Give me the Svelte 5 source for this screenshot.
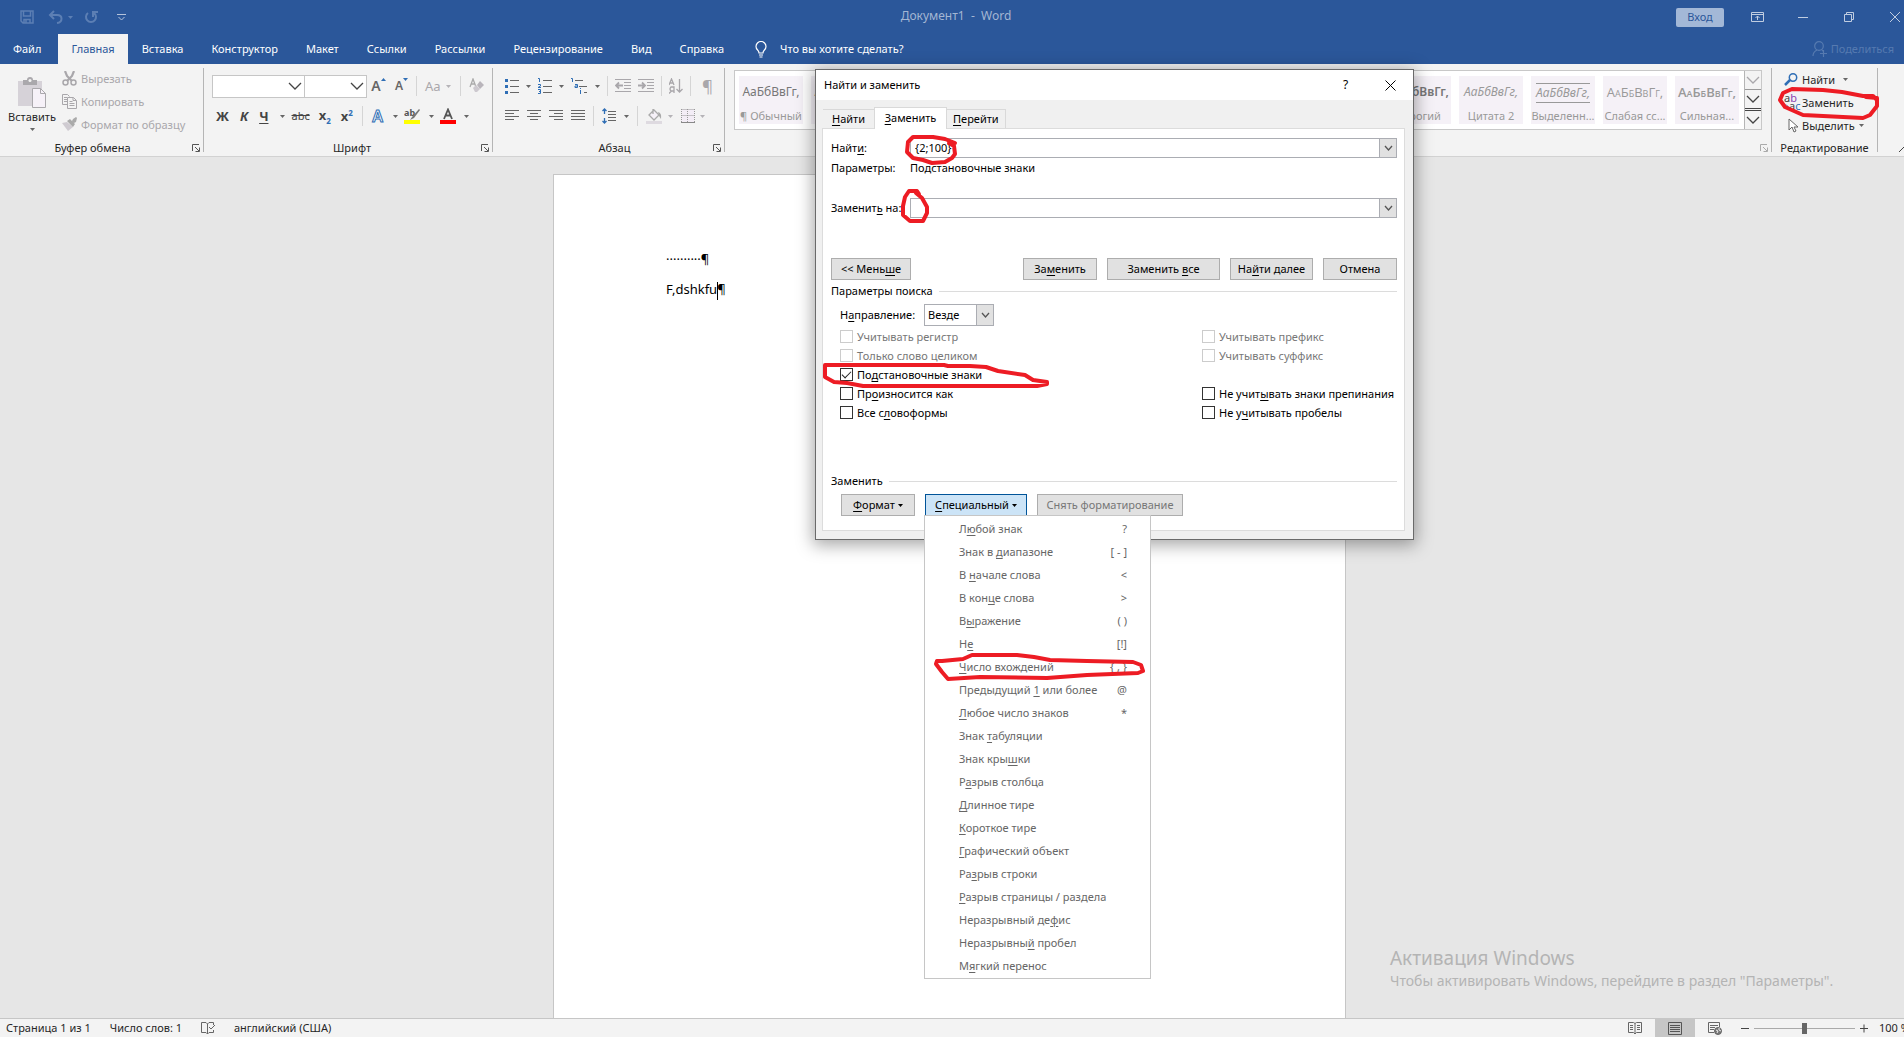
<script>
	let direction = $state('all');
	let zoom = $state(50);
	let find = $state('{2;100}');
	let replace = $state('');

	const tabs = ['Файл', 'Главная', 'Вставка', 'Конструктор', 'Макет', 'Ссылки', 'Рассылки', 'Рецензирование', 'Вид', 'Справка'];

	const styles = [
		{ name: '¶ Обычный', kind: 'dark' },
		{ name: '¶ Без ин...', kind: 'dark' },
		{ name: 'Заголо...', kind: '' },
		{ name: 'Заголо...', kind: '' },
		{ name: 'Название', kind: '' },
		{ name: 'Подзаг...', kind: '' },
		{ name: 'Слабое...', kind: 'italic' },
		{ name: 'Выделе...', kind: 'italic' },
		{ name: 'Сильно...', kind: 'italic' },
		{ name: 'Строгий', kind: 'bold dark' },
		{ name: 'Цитата 2', kind: 'italic' },
		{ name: 'Выделенн...', kind: 'italic lined' },
		{ name: 'Слабая сс...', kind: 'caps' },
		{ name: 'Сильная...', kind: 'caps bold' }
	];

	// "&" stands before the access key
	const special = [
		['Л&юбой знак', '?'],
		['Знак в &диапазоне', '[ - ]'],
		['В &начале слова', '<'],
		['В кон&це слова', '>'],
		['В&ыражение', '( )'],
		['Н&е', '[!]'],
		['&Число вхождений', '{ , }'],
		['Предыдущий &1 или более', '@'],
		['&Любое число знаков', '*'],
		['Знак &табуляции'],
		['Знак кры&шки'],
		['Р&азрыв столбца'],
		['&Длинное тире'],
		['&Короткое тире'],
		['&Графический объект'],
		['Ра&зрыв строки'],
		['&Разрыв страницы / раздела'],
		['Неразрывный де&фис'],
		['Неразрывны&й пробел'],
		['М&ягкий перенос']
	];

	const leftOptions = [
		{ label: 'Учитывать регистр', disabled: true },
		{ label: 'Только слово целиком', disabled: true },
		{ label: 'По&дстановочные знаки', checked: true },
		{ label: 'Пр&оизносится как' },
		{ label: 'Все с&ловоформы' }
	];

	const rightOptions = [
		{ label: 'Учитывать префикс', disabled: true },
		{ label: 'Учитывать суффикс', disabled: true },
		null,
		{ label: 'Не учит&ывать знаки препинания' },
		{ label: 'Не у&читывать пробелы' }
	];

	const ink = [
		'M955 143L945 139L933 137L913 137L908 142L907 152L913 158L923 160L932 163L945 162L952 158L955 154L954 146L949 143',
		'M919 194L917 191L909 191L905 197L903 206V215L910 221H923L927 213V207L922 198L916 193',
		'M986 367L970 366H948L944 365H825V377L834 382L847 383L863 386H1037L1047 384V382L1033 380L1025 375L998 371L986 367',
		'M942 661L963 659L972 655H1017L1034 657L1050 660L1087 661L1133 662L1141 665L1143 671L1138 673L1087 675L1047 678L980 677L948 679L942 672L936 664L937 661H942',
		'M1876 99L1873 96L1863 96L1842 92L1823 90L1792 89L1783 93L1780 100L1785 107L1803 115L1863 118L1870 115L1877 106V98L1866 97'
	];
</script>

{#snippet mnemonic(text)}
	{@const at = text.indexOf('&')}
	{#if at < 0}{text}{:else}<span>{text.slice(0, at)}<u>{text[at + 1]}</u>{text.slice(at + 2)}</span>{/if}
{/snippet}

{#snippet caret()}
	<svg class="caret" width="5" height="3" viewBox="0 0 5 3"><path d="M0 0h5L2.500 3z" fill="currentColor" /></svg>
{/snippet}

{#snippet chevron(w, h)}
	<svg width={w} height={h} viewBox="0 0 {w} {h}"><path d="M1 1L{w / 2} {h - 1}L{w - 1} 1" fill="none" stroke="currentColor" stroke-width="1.3" /></svg>
{/snippet}

{#snippet launcher(label)}
	<button class="launcher" aria-label={label}>
		<svg width="8" height="8" viewBox="0 0 8 8"><path d="M.5 7V.5H7M3 3l4 4M7.500 3.500v4h-4" fill="none" stroke="currentColor" /></svg>
	</button>
{/snippet}

{#snippet lines(rows)}
	<svg width="14" height="12" viewBox="0 0 14 12">
		{#each rows as [a, b], i}
			<path d="M{a} {i * 3 + 0.5}H{b}" stroke="#666" />
		{/each}
	</svg>
{/snippet}

{#snippet option(o, id)}
	<div class="option" class:off={o?.disabled}>
		{#if o}
			<input type="checkbox" {id} checked={o.checked} disabled={o.disabled} />
			<label for={id}>{@render mnemonic(o.label)}</label>
		{/if}
	</div>
{/snippet}

<div class="app">
	<header class="titlebar">
		<div class="quick">
			<button aria-label="Сохранить">
				<svg width="14" height="14" viewBox="0 0 14 14" fill="none" stroke="currentColor" stroke-width="1.5"><path d="M1 1h12v12H3l-2-2zM3.500 1v5h7V1M4 13V9.500h6V13M6 10v3" /></svg>
			</button>
			<button aria-label="Отменить">
				<svg width="15" height="14" viewBox="0 0 15 14" fill="none" stroke="currentColor" stroke-width="2"><path d="M6 1L2 5l4 4M2 5h7c6 0 6 7 0 8" /></svg>
			</button>
			{@render caret()}
			<button class="redo" aria-label="Повторить">
				<svg width="14" height="14" viewBox="0 0 14 14" fill="none" stroke="currentColor" stroke-width="2"><path d="M4 3a5 5 0 1 0 6 0M9 7V2h5" /></svg>
			</button>
			<button class="more" aria-label="Настройка панели">
				<svg width="9" height="7" viewBox="0 0 9 7" fill="none" stroke="currentColor"><path d="M0 .5h9M1.500 3l3 3 3-3" /></svg>
			</button>
		</div>
		<h1>Документ1&nbsp; -&nbsp; Word</h1>
		<div class="window-controls">
			<button class="signin">Вход</button>
			<button class="win" aria-label="Параметры ленты"><svg width="13" height="10" viewBox="0 0 13 10" fill="none" stroke="currentColor"><path d="M.5.500h12v9H.5zM.5 2.500h12M6.500 8V4M4.500 6l2-2 2 2" /></svg></button>
			<button class="win" aria-label="Свернуть"><svg width="10" height="10" viewBox="0 0 10 10" stroke="currentColor"><path d="M0 5.500h10" /></svg></button>
			<button class="win" aria-label="Восстановить"><svg width="10" height="10" viewBox="0 0 10 10" fill="none" stroke="currentColor"><path d="M.5 2.500h7v7h-7zM2.500 2.500v-2h7v7h-2" /></svg></button>
			<button class="win last" aria-label="Закрыть"><svg width="10" height="10" viewBox="0 0 10 10" stroke="currentColor"><path d="M0 0l10 10M10 0L0 10" /></svg></button>
		</div>
	</header>

	<nav class="tabs">
		{#each tabs as tab, i}
			<button class:active={i === 1} class:file={i === 0}>{tab}</button>
		{/each}
		<button class="tell">
			<svg width="12" height="17" viewBox="0 0 12 17" fill="none" stroke="currentColor" stroke-width="1.2"><path d="M4 12c0-3-3-3-3-6.500a5 5 0 0 1 10 0C11 9 8 9 8 12zM4 14h4M4.500 16h3" /></svg>
			Что вы хотите сделать?
		</button>
		<button class="share">
			<svg width="15" height="16" viewBox="0 0 15 16" fill="none" stroke="currentColor" stroke-width="1.2"><circle cx="7" cy="5" r="4.300" /><path d="M1 15c0-4 2-5 4-6M10 9l1 1M8 12.500h7M11.500 9v7" /></svg>
			Поделиться
		</button>
	</nav>

	<section class="ribbon">
		<div class="group clipboard">
			<div class="row">
				<button class="paste">
					<svg width="30" height="32" viewBox="0 0 30 32"><path d="M1 4h24v25H1z" fill="#d6d2d8" /><path d="M6 3h4q0-3 3-3t3 3h4v5H6z" fill="#aaa8ac" /><circle cx="13" cy="3.500" r="1.500" fill="#f3f3f3" /><path d="M15.500 11.500h8l5 5v14h-13z" fill="#f6f1f8" stroke="#aaa8ac" /><path d="M23.500 11.500v5h5" fill="none" stroke="#aaa8ac" /></svg>
					<span>Вставить</span>
					{@render caret()}
				</button>
				<div class="stack off">
					<button><svg width="15" height="15" viewBox="0 0 15 15" fill="none" stroke="currentColor" stroke-width="1.500"><path d="M3 0l2 5 5 5M12 0l-2 5-5 5" stroke-width="2.200" /><circle cx="3.500" cy="11.500" r="2.500" /><circle cx="11.500" cy="11.500" r="2.500" /></svg>Вырезать</button>
					<button><svg width="15" height="15" viewBox="0 0 15 15" fill="none" stroke="currentColor"><path d="M5 10.500H.5v-10h5l2 2M2 3.500h3M2 5.500h3M2 7.500h3M5.500 3.500h6l3 3v8h-9zM11 3.500v3h3M7.500 7.500h3M7.500 9.500h5M7.500 11.500h5" /></svg>Копировать</button>
					<button><svg width="15" height="15" viewBox="0 0 15 15"><path d="M0 6l5-1 6 5-5 4z" fill="#cfcbd1" /><path d="M5 4l3-2 5 5-2 3zM11 2l3-2 1 1-1 4-2 1-2-2z" fill="#aaa" /></svg>Формат по образцу</button>
				</div>
			</div>
			<footer>Буфер обмена{@render launcher('Буфер обмена')}</footer>
		</div>

		<div class="group font">
			<div class="row first">
				<div class="combo"><input class="face" aria-label="Шрифт" /><span>{@render chevron(14, 8)}</span></div>
				<div class="combo"><input class="size" aria-label="Размер шрифта" /><span>{@render chevron(14, 8)}</span></div>
				<button class="grow">A<svg width="5" height="3" viewBox="0 0 5 3"><path d="M0 3L2.500 0 5 3z" fill="#2f6eb5" /></svg></button>
				<button class="shrink">A<svg width="5" height="3" viewBox="0 0 5 3"><path d="M0 0L2.500 3 5 0z" fill="#2f6eb5" /></svg></button>
				<i class="rule"></i>
				<button class="case off">Aa {@render caret()}</button>
				<i class="rule"></i>
				<button class="off" aria-label="Очистить формат"><svg width="15" height="16" viewBox="0 0 15 16"><path d="M1 9L4 1l3 8M2 6h4" fill="none" stroke="#aaa" stroke-width="1.300" /><path d="M8 7l3-4 4 4-4 4z" fill="#b9b5bb" /><path d="M4 10l3-3 4 4-3 3H6z" fill="#cdc9cf" /></svg></button>
			</div>
			<div class="row second">
				<button class="b">Ж</button>
				<button class="b k">К</button>
				<button class="b under"><u>Ч</u></button>
				{@render caret()}
				<button class="strike">abc</button>
				<button class="b x"><span>x<sub>2</sub></span></button>
				<button class="b x"><span>x<sup>2</sup></span></button>
				<i class="rule"></i>
				<button class="fx">A</button>
				{@render caret()}
				<button class="mark" aria-label="Цвет выделения"><svg width="17" height="16" viewBox="0 0 17 16"><text x="0" y="8" font-size="9" font-weight="700" fill="#555">ab</text><path d="M15 1L8 9l-2 3 4-2 6-8z" fill="#777" /><path d="M0 12h16v4H0z" fill="#ff0" /></svg></button>
				{@render caret()}
				<button class="color" aria-label="Цвет текста"><svg width="16" height="16" viewBox="0 0 16 16"><path d="M4 11L8 1.500 12 11M5.500 7.500h5" fill="none" stroke="#555" stroke-width="1.800" /><path d="M0 12h16v4H0z" fill="red" /></svg></button>
				{@render caret()}
			</div>
			<footer>Шрифт{@render launcher('Шрифт')}</footer>
		</div>

		<div class="group para">
			<div class="row first">
				<button aria-label="Маркеры"><svg width="14" height="16" viewBox="0 0 14 16"><path d="M5 2.500h9M5 8.500h9M5 14.500h9" stroke="#666" /><path d="M0 1h3v3H0zM0 7h3v3H0zM0 13h3v3H0z" fill="#2f6eb5" /></svg></button>
				{@render caret()}
				<button aria-label="Нумерация"><svg width="14" height="16" viewBox="0 0 14 16"><path d="M5 2.500h9M5 8.500h9M5 14.500h9" stroke="#666" /><path d="M0 .5h1.500V4M0 6.500h2.500v1.500L0 9.500h3M0 11.500h2.500v4H0M1 13.500h1.500" fill="none" stroke="#2f6eb5" /></svg></button>
				{@render caret()}
				<button aria-label="Многоуровневый список"><svg width="17" height="16" viewBox="0 0 17 16"><path d="M4 2.500h8M8 8.500h8M13 14.500h3" stroke="#666" /><path d="M0 .5h1.500V4M4 6.500h2.500v3H4V8h2M9.500 10v1M9.500 12v4" fill="none" stroke="#2f6eb5" /></svg></button>
				{@render caret()}
				<i class="rule"></i>
				<button class="off" aria-label="Уменьшить отступ"><svg width="16" height="14" viewBox="0 0 16 14" fill="none" stroke="currentColor"><path d="M0 .5h16M9 3.500h7M9 6.500h7M9 9.500h7M0 12.500h16" /><path d="M8 6.500H1M4 3.500l-3 3 3 3" stroke-width="1.800" /></svg></button>
				<button class="off" aria-label="Увеличить отступ"><svg width="16" height="14" viewBox="0 0 16 14" fill="none" stroke="currentColor"><path d="M0 .5h16M9 3.500h7M9 6.500h7M9 9.500h7M0 12.500h16" /><path d="M0 6.500h7M4 3.500l3 3-3 3" stroke-width="1.800" /></svg></button>
				<i class="rule"></i>
				<button class="off" aria-label="Сортировка"><svg width="14" height="16" viewBox="0 0 14 16" fill="none" stroke="currentColor" stroke-width="1.300"><path d="M0 7l2.500-6L5 7M1 5h3M5 15V9H2q-2 2 0 4h3M2.500 13L0 15.500M10.500 1v13M7.500 11l3 3 3-3" /></svg></button>
				<i class="rule"></i>
				<button class="pilcrow off">¶</button>
			</div>
			<div class="row second">
				<button aria-label="По левому краю">{@render lines([[0, 14], [0, 9], [0, 14], [0, 9]])}</button>
				<button aria-label="По центру">{@render lines([[0, 14], [3, 11], [0, 14], [3, 11]])}</button>
				<button aria-label="По правому краю">{@render lines([[0, 14], [5, 14], [0, 14], [5, 14]])}</button>
				<button aria-label="По ширине">{@render lines([[0, 14], [0, 14], [0, 14], [0, 14]])}</button>
				<i class="rule"></i>
				<button aria-label="Интервал"><svg width="14" height="16" viewBox="0 0 14 16" fill="none"><path d="M6 3.500h8M6 6.500h8M6 9.500h8M6 12.500h8" stroke="#666" /><path d="M2.500 1v5M.5 3l2-2 2 2M2.500 15v-5M.5 13l2 2 2-2" stroke="#2f6eb5" stroke-width="1.300" /></svg></button>
				{@render caret()}
				<i class="rule"></i>
				<span class="off pair"><svg width="17" height="16" viewBox="0 0 17 16"><path d="M7 1v5M3 7l5-5 5 5-5 5z" fill="#f6f1f8" stroke="#aaa" stroke-width="1.300" /><path d="M12 4q4 1 3 7l-2-3z" fill="#aaa" /><path d="M0 13h16v3H0z" fill="#dedae0" /></svg>{@render caret()}</span>
				<span class="off pair"><svg width="14" height="14" viewBox="0 0 14 14"><path d="M0 0h13v13H0z" fill="#f3edf6" /><path d="M.5.500h13M.5 6.500h13M.5 0v13M6.500 0v13M13.500 0v13" fill="none" stroke="#999" stroke-dasharray="1 1" /><path d="M0 13.500h14" stroke="#888" /></svg>{@render caret()}</span>
			</div>
			<footer>Абзац{@render launcher('Абзац')}</footer>
		</div>

		<div class="group styles">
			<div class="gallery">
				<div class="tiles">
					{#each styles as s}
						<button class="tile"><b class={s.kind}>АаБбВвГг,</b><span>{s.name}</span></button>
					{/each}
				</div>
				<div class="scroll">
					<button class="off" aria-label="Вверх">{@render chevron(14, 8)}</button>
					<button aria-label="Вниз">{@render chevron(14, 8)}</button>
					<button class="all" aria-label="Все стили">{@render chevron(14, 8)}</button>
				</div>
			</div>
			<footer class="off">{@render launcher('Стили')}</footer>
		</div>

		<div class="group editing">
			<div class="stack">
				<button><svg width="14" height="13" viewBox="0 0 14 13" fill="none" stroke="#2f6eb5"><circle cx="9" cy="4.500" r="3.700" stroke-width="1.500" /><path d="M6 7l-5 5" stroke-width="2.500" /></svg>Найти <span class="gap">{@render caret()}</span></button>
				<button class="swap"><svg width="17" height="18" viewBox="0 0 17 18"><text x="0" y="8" font-size="11" fill="#444">a<tspan fill="#8a3fb0">b</tspan></text><text x="5" y="16" font-size="11" fill="#444">a<tspan fill="#2f6eb5">c</tspan></text><path d="M0 12.500h4M2 10.500l2 2-2 2" stroke="#2f6eb5" fill="none" /></svg>Заменить</button>
				<button><svg class="arrow" width="10" height="15" viewBox="0 0 10 15"><path d="M1 1v11l3-3 2 5 2-1-2-4h4z" fill="#fff" stroke="#666" /></svg>Выделить{@render caret()}</button>
			</div>
			<footer>Редактирование</footer>
		</div>
		<button class="collapse" aria-label="Свернуть ленту"><svg width="5" height="5" viewBox="0 0 5 5"><path d="M0 5l5-5" stroke="#444" /></svg></button>
	</section>

	<main>
		<article class="page">
			<p>··········¶</p>
			<p>F,dshkfu<i class="cursor"></i>¶</p>
		</article>
		<div class="activation">
			<h2>Активация Windows</h2>
			<p>Чтобы активировать Windows, перейдите в раздел "Параметры".</p>
		</div>
	</main>

	<footer class="status">
		<span>Страница 1 из 1</span>
		<span>Число слов: 1</span>
		<svg width="14" height="13" viewBox="0 0 14 13" fill="none" stroke="#666"><path d="M6.500 12V2L5 .5H.5v10H5l1.500 1.500L8 10.500h4.500V8M6.500 2L8 .5h4.500V3M8 5l2 2 4-4" /></svg>
		<span>английский (США)</span>
		<div class="views">
			<button aria-label="Режим чтения"><svg width="14" height="13" viewBox="0 0 14 13" fill="none" stroke="#666"><path d="M7 12V1.500L5.500.500H.5v10h5L7 12l1.500-1.500h5V.5h-5L7 1.500M2 3.500h3M2 5.500h3M2 7.500h3M9 3.500h3M9 5.500h3M9 7.500h3" /></svg></button>
			<button class="current" aria-label="Разметка страницы"><svg width="14" height="13" viewBox="0 0 14 13" fill="none" stroke="#555"><path d="M.5.500h13v12H.5zM2 3.500h10M2 5.500h10M2 7.500h10M2 9.500h10" /></svg></button>
			<button aria-label="Веб-документ"><svg width="14" height="13" viewBox="0 0 14 13" fill="none" stroke="#666"><path d="M6 10.500H.5V.5h11V5M2 3.500h8M2 5.500h5M2 7.500h4" /><circle cx="10" cy="9" r="3.500" fill="#777" /><path d="M8 8l2 1-1 2M11 6v2l2 1" stroke="#eee" /></svg></button>
		</div>
		<div class="zoom">
			<button aria-label="Уменьшить"><svg width="8" height="9" viewBox="0 0 8 9" stroke="#444"><path d="M0 4.500h8" /></svg></button>
			<input type="range" aria-label="Масштаб" bind:value={zoom} />
			<button aria-label="Увеличить"><svg width="8" height="9" viewBox="0 0 8 9" stroke="#444"><path d="M0 4.500h8M4 .5v8" /></svg></button>
			<span class="percent">100 %</span>
		</div>
	</footer>

	<div class="dialog" role="dialog" aria-label="Найти и заменить">
		<header>
			<h2>Найти и заменить</h2>
			<button>?</button>
			<button aria-label="Закрыть"><svg width="11" height="11" viewBox="0 0 11 11" stroke="#000"><path d="M.5.500l10 10M10.500.500l-10 10" /></svg></button>
		</header>
		<div class="pages">
			<button class="left">{@render mnemonic('&Найти')}</button>
			<button class="active">{@render mnemonic('&Заменить')}</button>
			<button>{@render mnemonic('&Перейти')}</button>
		</div>
		<div class="panel">
			<div class="field">
				<label for="find">{@render mnemonic('Найт&и:')}</label>
				<div class="box"><input id="find" bind:value={find} /><button aria-label="Список">{@render chevron(9, 6)}</button></div>
			</div>
			<div class="field info"><span>Параметры:</span><span>Подстановочные знаки</span></div>
			<div class="field">
				<label for="replace">{@render mnemonic('Заменит&ь на:')}</label>
				<div class="box"><input id="replace" bind:value={replace} /><button aria-label="Список">{@render chevron(9, 6)}</button></div>
			</div>
			<div class="actions">
				<button class="less">{@render mnemonic('<< Мень&ше')}</button>
				<button class="one">{@render mnemonic('За&менить')}</button>
				<button class="every">{@render mnemonic('Заменить &все')}</button>
				<button class="next">{@render mnemonic('На&йти далее')}</button>
				<button class="one">Отмена</button>
			</div>
			<h3>Параметры поиска</h3>
			<div class="direction">
				<label for="direction">{@render mnemonic('Н&аправление:')}</label>
				<div class="select">
					<select id="direction" bind:value={direction}>
						<option value="all">Везде</option>
						<option value="down">Вперед</option>
						<option value="up">Назад</option>
					</select>
					<span>{@render chevron(9, 6)}</span>
				</div>
			</div>
			<div class="options">
				<div>{#each leftOptions as o, i}{@render option(o, `left-${i}`)}{/each}</div>
				<div>{#each rightOptions as o, i}{@render option(o, `right-${i}`)}{/each}</div>
			</div>
			<h3 class="bottom">Заменить</h3>
			<div class="formats">
				<button class="format">{@render mnemonic('&Формат')}{@render caret()}</button>
				<div class="anchor">
					<button class="special">{@render mnemonic('&Специальный')}{@render caret()}</button>
					<div class="menu" role="menu">
						{#each special as [label, sign]}
							<button role="menuitem">{@render mnemonic(label)}<span>{sign ?? ''}</span></button>
						{/each}
					</div>
				</div>
				<button class="clear" disabled>Снять форматирование</button>
			</div>
		</div>
	</div>

	<svg class="ink" width="1904" height="1037" viewBox="0 0 1904 1037">
		{#each ink as d}
			<path {d} />
		{/each}
	</svg>
</div>

<style>
	:global(body) {
		overflow: hidden;
	}

	.app {
		position: relative;
		display: flex;
		flex-direction: column;
		height: 100vh;
		overflow: hidden;
		font: 11px/16px 'Noto Sans', 'Open Sans', sans-serif;
		color: #262626;
		background: #e6e6e6;
	}

	button,
	input,
	select {
		font: inherit;
		color: inherit;
		background: none;
		border: 0;
		border-radius: 0;
		padding: 0;
		margin: 0;
		outline: 0;
	}

	button {
		display: flex;
		align-items: center;
		justify-content: center;
		white-space: nowrap;
	}

	h1,
	h2,
	h3,
	p {
		margin: 0;
		font-size: 11px;
		font-weight: 400;
	}

	svg {
		flex: none;
		display: block;
	}

	u {
		text-underline-offset: 2px;
	}

	.off {
		color: #a9a7ab;
	}

	.caret {
		color: #666;
	}

	.off .caret {
		color: #b5b3b7;
	}

	/* title bar and tabs */
	.titlebar {
		flex: none;
		display: grid;
		grid-template-columns: 1fr auto 1fr;
		align-items: center;
		height: 34px;
		background: #2b579a;
		color: #a3b6d3;
	}

	.quick {
		display: flex;
		align-items: center;
		padding-left: 20px;
		gap: 14px;
		color: #5c7fb4;
	}

	.quick .caret {
		color: #5c7fb4;
		margin-left: -9px;
	}

	.redo {
		margin-left: -3px;
	}

	.more {
		color: #b4c3db;
		margin-left: 5px;
	}

	h1 {
		padding: 0 0 2px 8px;
		font-size: 12px;
	}

	.window-controls {
		display: flex;
		justify-content: flex-end;
		align-items: center;
		height: 30px;
	}

	.signin {
		width: 48px;
		height: 19px;
		margin-right: 10px;
		border-radius: 2px;
		background: #a3b8d7;
		color: #2b579a;
	}

	.win {
		width: 46px;
		height: 30px;
		color: #c0cde1;
	}

	.last {
		width: 32px;
		padding-left: 14px;
	}

	.tabs {
		flex: none;
		display: flex;
		height: 30px;
		background: #2b579a;
		color: #fff;
	}

	.tabs button {
		padding: 0 14px;
	}

	.tabs .file {
		margin-right: 3px;
		padding-left: 13px;
	}

	.tabs .active {
		padding: 0 13px;
		background: #f3f3f3;
		color: #2b579a;
	}

	.tabs .tell {
		gap: 13px;
		padding-left: 17px;
	}

	.tabs .share {
		gap: 4px;
		margin-left: auto;
		padding-right: 10px;
		color: #567ab0;
	}

	/* ribbon */
	.ribbon {
		flex: none;
		display: flex;
		height: 92px;
		background: #f3f3f3;
		border-bottom: 1px solid #d2d2d2;
		color: #444;
	}

	.group {
		flex: none;
		position: relative;
		display: flex;
		flex-direction: column;
		margin: 4px 0;
		border-right: 1px solid #b5b5b5;
		box-sizing: border-box;
	}

	.group footer {
		display: flex;
		justify-content: center;
		height: 8px;
		line-height: 8px;
		margin-top: auto;
		color: #262626;
	}

	.launcher {
		position: absolute;
		right: 3px;
		bottom: 0;
		color: #555;
	}

	.off .launcher {
		color: #aaa;
	}

	.row {
		display: flex;
		align-items: center;
	}

	.clipboard {
		width: 204px;
	}

	.clipboard .row {
		gap: 6px;
		padding-left: 8px;
	}

	.clipboard footer {
		padding-right: 18px;
	}

	.paste {
		flex-direction: column;
		width: 48px;
		color: #262626;
	}

	.paste svg {
		margin-top: 3px;
	}

	.stack {
		display: flex;
		flex-direction: column;
		align-items: flex-start;
	}

	.stack button {
		height: 23px;
		gap: 4px;
	}

	.clipboard .stack {
		margin-top: -1px;
	}

	.font {
		width: 289px;
		padding-left: 8px;
	}

	.first {
		height: 28px;
		margin-top: 4px;
	}

	.second {
		height: 24px;
		margin-top: 4px;
	}

	.rule {
		width: 1px;
		height: 20px;
		background: #d5d5d5;
	}

	.combo {
		display: flex;
		align-items: center;
	}

	.combo input {
		height: 23px;
		border: 1px solid #c6c6c6;
		background: #fff;
		box-sizing: border-box;
	}

	.combo + .combo input {
		border-left: 0;
	}

	.combo span {
		margin-left: -17px;
		margin-right: 3px;
	}

	.face {
		width: 93px;
	}

	.size {
		width: 62px;
	}

	.grow,
	.shrink {
		align-items: flex-start;
		width: 23px;
		font-size: 14px;
		font-weight: 600;
		color: #666;
	}

	.shrink {
		font-size: 12px;
	}

	.font .first .rule {
		margin: 0 8px 0 3px;
	}

	.case {
		gap: 5px;
		font-size: 13px;
		padding-right: 6px;
	}

	.font .second {
		gap: 8px;
		padding-left: 4px;
	}

	.font .second .caret {
		margin-right: -2px;
	}

	.b {
		font-weight: 700;
		font-size: 13px;
	}

	.k {
		font-style: italic;
		margin: 0 3px;
	}

	.under {
		margin-right: 4px;
	}

	.strike {
		text-decoration: line-through;
	}

	.x sub,
	.x sup {
		font-size: 8px;
		line-height: 8px;
		color: #2f6eb5;
	}

	.x {
		width: 14px;
	}

	.fx {
		width: 14px;
		font-size: 16px;
		font-weight: 600;
		color: #fff;
		-webkit-text-stroke: 1px #2f6eb5;
	}

	.para {
		width: 232px;
		padding-left: 12px;
	}

	.para .first {
		gap: 7px;
	}

	.para .second {
		gap: 8px;
	}

	.pilcrow {
		font-size: 17px;
		padding-left: 4px;
	}

	.pair {
		display: flex;
		align-items: center;
		gap: 5px;
	}

	.styles {
		flex: 1;
		min-width: 0;
		padding: 2px 9px 0;
	}

	.gallery {
		display: flex;
		height: 60px;
		box-sizing: border-box;
		border: 1px solid #c8c8c8;
		background: #fff;
	}

	.tiles {
		flex: 1;
		display: flex;
		gap: 8px;
		padding: 5px 4px;
		overflow: hidden;
	}

	.tile {
		flex: none;
		flex-direction: column;
		justify-content: space-between;
		align-items: center;
		width: 64px;
		box-sizing: border-box;
		padding-top: 7px;
		overflow: hidden;
		background: #f5f1f7;
		color: #999;
	}

	.tile b {
		font-weight: 400;
		font-size: 12px;
		line-height: 18px;
	}

	.tile .dark {
		color: #777;
	}

	.tile .italic {
		font-style: italic;
	}

	.tile .bold {
		font-weight: 600;
	}

	.tile .caps {
		font-family: 'Open Sans', sans-serif;
		font-size: 13px;
		font-variant: small-caps;
	}

	.tile .lined {
		border: 1px solid #999;
		border-width: 1px 0;
	}

	.scroll {
		display: flex;
		flex-direction: column;
		width: 16px;
		border-left: 1px solid #b5b5b5;
		background: #f3f3f3;
	}

	.scroll button {
		flex: 1;
	}

	.scroll button + button {
		border-top: 1px solid #999;
	}

	.scroll .all {
		border-top: 3px double #444;
	}

	.editing {
		width: 106px;
		color: #262626;
	}

	.editing .stack {
		padding-left: 12px;
	}

	.editing .swap {
		gap: 1px;
	}

	.editing .arrow {
		margin: 0 0 0 4px;
	}

	.gap {
		margin-left: 4px;
	}

	.collapse {
		width: 26px;
		align-items: flex-end;
		justify-content: flex-end;
		padding-bottom: 4px;
	}

	/* document */
	main {
		flex: 1;
		min-height: 0;
		display: flex;
		justify-content: center;
		padding: 17px 5px 0 0;
	}

	.page {
		width: 793px;
		box-sizing: border-box;
		padding: 74px 112px 0;
		border: 1px solid #c6c6c6;
		border-bottom: 0;
		background: #fff;
		color: #000;
	}

	.page p {
		font-size: 13px;
		line-height: 20px;
		margin-bottom: 10px;
	}

	.cursor {
		display: inline-block;
		width: 1px;
		height: 18px;
		margin-right: -1px;
		vertical-align: middle;
		background: #000;
	}

	.activation {
		position: absolute;
		right: 60px;
		bottom: 46px;
		width: 454px;
		color: #b4b4b4;
		white-space: nowrap;
	}

	.activation h2 {
		font-size: 19px;
		line-height: 24px;
	}

	.activation p {
		font-size: 14px;
		line-height: 21px;
	}

	/* status bar */
	.status {
		flex: none;
		display: flex;
		align-items: center;
		height: 18px;
		gap: 19px;
		padding-left: 6px;
		border-top: 1px solid #c6c6c6;
		background: #f3f3f3;
	}

	.views {
		display: flex;
		margin-left: auto;
	}

	.views button {
		width: 40px;
		height: 18px;
	}

	.views .current {
		background: #c6c6c6;
	}

	.zoom {
		display: flex;
		align-items: center;
		gap: 5px;
		margin-left: -13px;
	}

	.zoom input {
		appearance: none;
		width: 101px;
		height: 18px;
		background: linear-gradient(#aaa, #aaa) center / 100% 1px no-repeat;
	}

	.zoom input::-webkit-slider-thumb {
		appearance: none;
		width: 5px;
		height: 11px;
		background: #666;
	}

	.percent {
		width: 25px;
		padding-left: 6px;
		white-space: nowrap;
	}

	/* find and replace window */
	.dialog {
		position: absolute;
		left: 815px;
		top: 69px;
		width: 599px;
		height: 471px;
		box-sizing: border-box;
		display: flex;
		flex-direction: column;
		padding: 0 8px 8px 6px;
		border: 1px solid #6a6a6a;
		background: #f0f0f0;
		box-shadow: 0 3px 16px 2px rgba(0, 0, 0, 0.35);
		color: #000;
	}

	.dialog header {
		display: flex;
		align-items: center;
		height: 30px;
		margin: 0 -8px 7px -6px;
		padding-left: 8px;
		background: #fff;
	}

	.dialog header h2 {
		flex: 1;
		font-size: 11px;
	}

	.dialog header button {
		width: 45px;
		height: 30px;
		font-size: 12px;
	}

	.pages {
		display: flex;
		align-items: flex-end;
		height: 21px;
		padding-left: 1px;
	}

	.pages button {
		height: 19px;
		padding: 0 6px;
		border: 1px solid #d9d9d9;
		border-width: 1px 1px 0 0;
		box-sizing: border-box;
	}

	.pages .left {
		width: 51px;
		border-right: 0;
	}

	.pages .active {
		position: relative;
		width: 73px;
		height: 22px;
		margin-bottom: -1px;
		padding-bottom: 2px;
		border-left-width: 1px;
		background: #fff;
	}

	.panel {
		flex: 1;
		padding: 9px 7px 0 8px;
		border: 1px solid #dcdcdc;
		background: #fff;
	}

	.field {
		display: flex;
		align-items: center;
		height: 20px;
	}

	.field > :first-child {
		width: 79px;
		white-space: nowrap;
	}

	.info {
		margin-bottom: 20px;
	}

	.box {
		flex: 1;
		display: flex;
		height: 20px;
		box-sizing: border-box;
		border: 1px solid #abadb3;
	}

	.box input {
		flex: 1;
		padding-left: 4px;
	}

	.box button {
		width: 17px;
		box-sizing: border-box;
		border-left: 1px solid #abadb3;
		background: #e1e1e1;
		color: #555;
	}

	.actions {
		display: flex;
		gap: 10px;
		margin-top: 40px;
	}

	.actions button,
	.formats button {
		box-sizing: border-box;
		height: 22px;
		border: 1px solid #adadad;
		background: #e1e1e1;
	}

	.less {
		width: 80px;
		margin-right: auto;
	}

	.one {
		width: 74px;
	}

	.every {
		width: 113px;
	}

	.next {
		width: 83px;
	}

	h3 {
		display: flex;
		align-items: center;
		gap: 6px;
		margin-top: 3px;
	}

	h3::after {
		content: '';
		flex: 1;
		border-top: 1px solid #dcdcdc;
	}

	.direction {
		display: flex;
		align-items: center;
		gap: 9px;
		padding-left: 9px;
		margin-top: 5px;
	}

	.direction label {
		width: 75px;
	}

	.select {
		display: flex;
		width: 70px;
		height: 22px;
		box-sizing: border-box;
		border: 1px solid #abadb3;
	}

	.select select {
		flex: 1;
		min-width: 0;
		appearance: none;
		padding-left: 3px;
	}

	.select span {
		display: grid;
		place-content: center;
		width: 16px;
		border-left: 1px solid #abadb3;
		background: #e1e1e1;
		color: #555;
	}

	.options {
		display: grid;
		grid-template-columns: 362px 1fr;
		padding-left: 9px;
		margin-top: 1px;
	}

	.option {
		display: flex;
		align-items: center;
		gap: 4px;
		height: 19px;
		white-space: nowrap;
	}

	.option.off {
		color: #777;
	}

	.option input {
		appearance: none;
		box-sizing: border-box;
		width: 13px;
		height: 13px;
		border: 1px solid #333;
		background: #fff;
	}

	.option input:disabled {
		border-color: #ccc;
	}

	.option input:checked::after {
		content: '';
		display: block;
		width: 9px;
		height: 5px;
		margin: 2px 0 0 1px;
		border: 1px solid #222;
		border-width: 0 0 1px 1px;
		box-sizing: border-box;
		transform: rotate(-45deg);
	}

	.bottom {
		margin-top: 51px;
	}

	.formats {
		display: flex;
		gap: 10px;
		padding-left: 10px;
		margin-top: 5px;
	}

	.formats .caret {
		margin-left: 3px;
		color: #000;
	}

	.formats .format {
		width: 74px;
	}

	.formats .special {
		width: 102px;
		border-color: #005499;
		background: #cce4f7;
	}

	.formats .clear {
		width: 146px;
		color: #777;
	}

	.anchor {
		position: relative;
	}

	.menu {
		position: absolute;
		left: -1px;
		top: 21px;
		width: 227px;
		box-sizing: border-box;
		padding: 1px 0;
		border: 1px solid #c6c6c6;
		background: #fff;
		color: #666;
	}

	.formats .menu button {
		width: 100%;
		height: 23px;
		justify-content: space-between;
		padding: 0 23px 0 34px;
		border: 0;
		background: none;
	}

	/* hand-drawn marks over the window */
	.ink {
		position: absolute;
		left: 0;
		top: 0;
		pointer-events: none;
		fill: none;
		stroke: #ed1c24;
		stroke-width: 4;
		stroke-linecap: round;
		stroke-linejoin: round;
	}
</style>
